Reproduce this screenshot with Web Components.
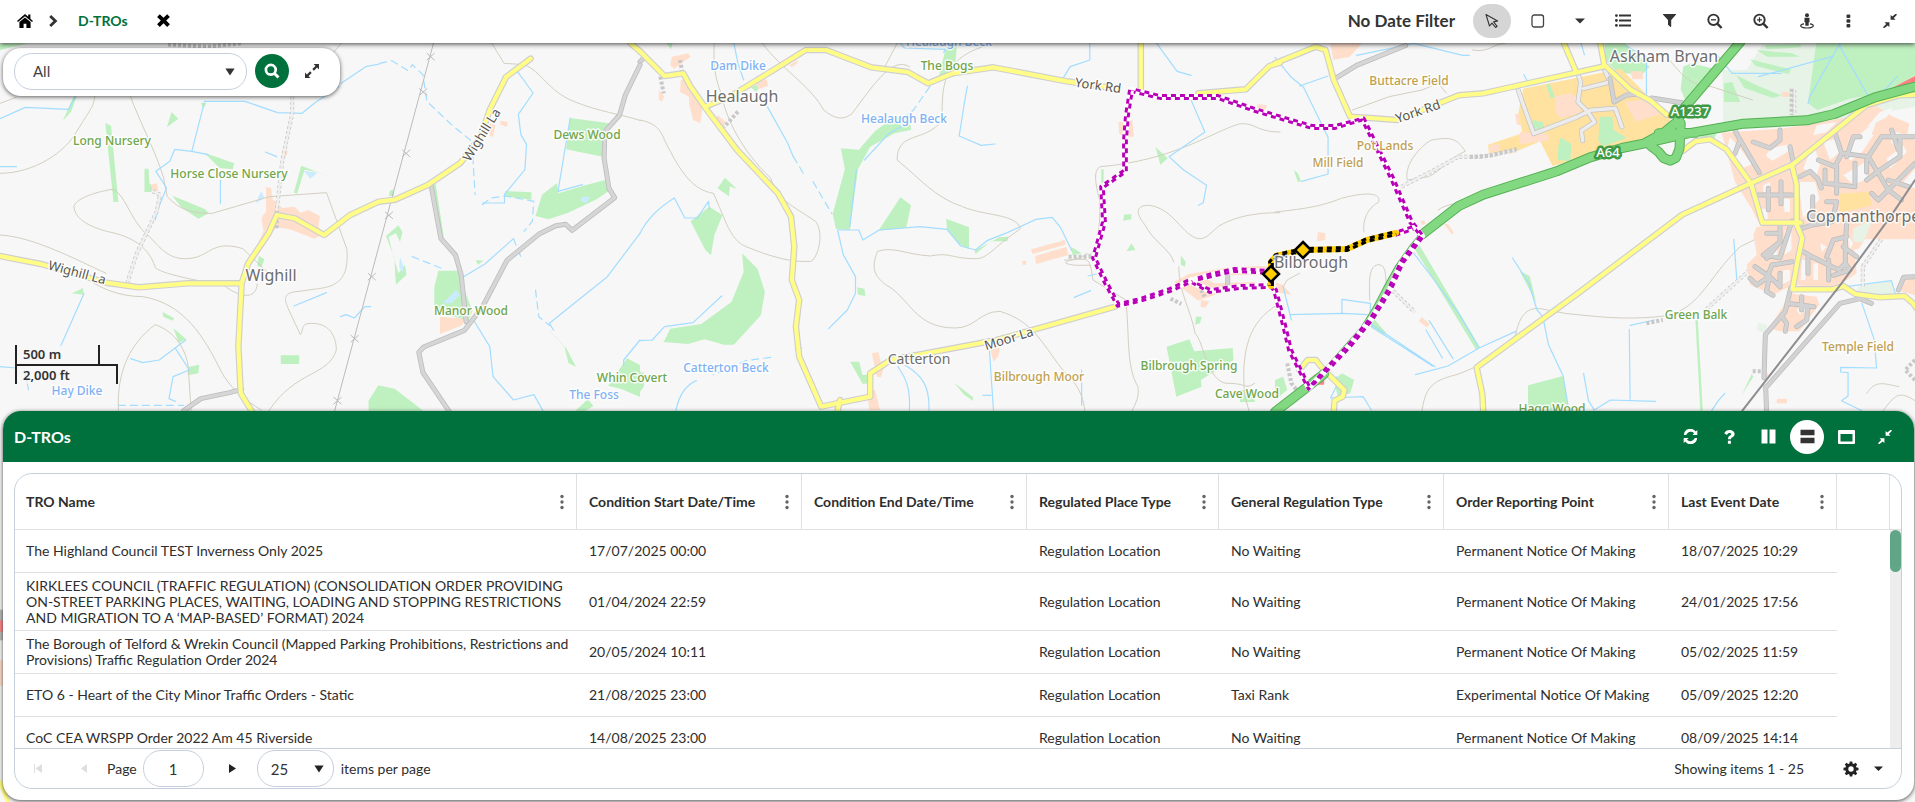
<!DOCTYPE html>
<html lang="en">
<head>
<meta charset="utf-8">
<title>D-TROs</title>
<style>
html,body{margin:0;height:100%}
body{font-family:Lato,"Open Sans",sans-serif;font-size:14px;color:#2e2e2e;background:#f7f7f7;overflow:hidden}
</style>
</head>
<body>
<tro-app></tro-app>

<template id="t-app">
<style>
:host{display:flex;flex-direction:column;height:100vh;position:relative;overflow:hidden}
tro-map{position:absolute;inset:0;z-index:0}
top-bar,main{position:relative}
top-bar{z-index:2}
main{flex:1;min-height:0;display:flex;flex-direction:column;z-index:1}
.view{flex:1;min-height:0;display:flex;flex-direction:column;justify-content:space-between;align-items:flex-start}
search-box{margin:5px 0 0 3px}
map-scale{margin:0 0 27px 15px}
tro-panel{height:calc(50vh - 12px);margin:0 1px 2px 3px}
</style>
<tro-map></tro-map>
<top-bar></top-bar>
<main>
  <div class="view"><search-box></search-box><map-scale></map-scale></div>
  <tro-panel></tro-panel>
</main>
</template>

<template id="t-tool">
<style>
:host{display:inline-flex;width:38px;height:34px}
:host([narrow]){width:29px}
:host([round]){width:34px}
button{all:unset;box-sizing:border-box;width:100%;height:100%;display:flex;align-items:center;justify-content:center;border-radius:17px;cursor:pointer;background:var(--tool-bg,transparent)}
button:focus-visible{outline:2px solid #00703c}
button:disabled{cursor:default}
</style>
<button type="button"><slot></slot></button>
</template>

<template id="t-top">
<style>
:host{display:flex;align-items:center;justify-content:space-between;height:43px;background:#fff;box-shadow:0 1px 5px rgba(0,0,0,.75);padding:0 6px 2px 17px;box-sizing:border-box}
nav,.tools{display:flex;align-items:center}
svg{display:block;fill:currentColor}
nav a{color:#000;text-decoration:none}
nav .chev{margin:0 20px 0 16px;color:#333}
nav a.here{color:#00703c;font-size:14px;font-weight:700;margin-right:29px}
nav button{all:unset;color:#000;cursor:pointer}
.tools{gap:8px;color:#333}
.date{font-size:17px;font-weight:700;margin-right:10px}
.on{--tool-bg:#d5d5d5}
.drop{margin-right:2px}
</style>
<nav aria-label="Breadcrumb">
  <a href="#" aria-label="Home"><svg width="16" height="14" viewBox="0 0 16 14"><path d="M8 0 0 7l1 1.100L8 2.200l7 5.900L16 7l-2.600-2.300V.6h-2.200v2.200zM8 3.400 2.400 8v6H6.600V9.800h2.800V14h4.200V8z"/></svg></a>
  <svg class="chev" width="9" height="12" viewBox="0 0 9 12"><path d="M2.200 0 8.400 6 2.200 12 .2 10.100 4.400 6 .2 1.900z"/></svg>
  <a class="here" href="#">D-TROs</a>
  <button type="button" aria-label="Close"><svg width="13" height="13" viewBox="0 0 12 12"><path d="M2.600.2 6 3.500 9.400.2 11.900 2.700 8.500 6l3.400 3.400-2.500 2.500L6 8.500 2.600 11.900.1 9.400 3.500 6 .1 2.700z"/></svg></button>
</nav>
<div class="tools">
  <span class="date">No Date Filter</span>
  <tool-button class="on" label="Select"><svg width="15" height="16" viewBox="0 0 15 16" stroke="#333" stroke-width="1.1" stroke-linejoin="round" style="fill:none"><path d="M1 1.500 4.500 13l2.500-2.800 3.600 4.300 1.500-1.200-3.500-4.400 4-1z"/></svg></tool-button>
  <tool-button label="Area select"><svg width="14" height="14" viewBox="0 0 14 14" style="fill:none" stroke="#444" stroke-width="1.300"><rect x="1" y="1" width="11.500" height="12" rx="2.200"/></svg></tool-button>
  <tool-button class="drop" narrow label="More selection tools"><svg width="10" height="6" viewBox="0 0 10 6"><path d="M0 .5h10L5 5.600z"/></svg></tool-button>
  <tool-button label="Layers list"><svg width="16" height="13" viewBox="0 0 16 13"><path d="M4 .6h12v2H4zM4 5.500h12v2H4zM4 10.400h12v2H4z"/><circle cx="1.400" cy="1.600" r="1.400"/><circle cx="1.400" cy="6.500" r="1.400"/><circle cx="1.400" cy="11.400" r="1.400"/></svg></tool-button>
  <tool-button label="Filter"><svg width="13" height="13" viewBox="0 0 13 13"><path d="M.3 0h12.400c.3 0 .4.500.2.800L8.200 6v6.600c0 .4-.4.500-.7.300L5 10.800V6L.1.800C-.1.500 0 0 .3 0z"/></svg></tool-button>
  <tool-button label="Zoom out"><svg width="16" height="16" viewBox="0 0 16 16" style="fill:none" stroke="#333"><circle cx="6.500" cy="6.800" r="5.200" stroke-width="1.900"/><path d="M10.500 10.800 14.600 15" stroke-width="2.500"/><path d="M4 6.800h5" stroke-width="1.300"/></svg></tool-button>
  <tool-button label="Zoom in"><svg width="16" height="16" viewBox="0 0 16 16" style="fill:none" stroke="#333"><circle cx="6.500" cy="6.800" r="5.200" stroke-width="1.900"/><path d="M10.500 10.800 14.600 15" stroke-width="2.500"/><path d="M4 6.800h5M6.500 4.300v5" stroke-width="1.200"/></svg></tool-button>
  <tool-button label="Street view"><svg width="14" height="16" viewBox="0 0 14 16"><circle cx="7" cy="2.300" r="2"/><path d="M4.500 4.800h5v4.400H8.700v3.600H5.300V9.200h-.8z"/><path d="M4 10.800c-2 .3-3.300 1-3.300 1.900C.7 14 3.300 15 7 15s6.300-1 6.300-2.300c0-.9-1.300-1.600-3.300-1.900" fill="none" stroke="#333" stroke-width="1.200"/></svg></tool-button>
  <tool-button narrow label="Menu"><svg width="5" height="14" viewBox="0 0 5 14"><rect x=".5" y=".4" width="3.800" height="3.500" rx="1"/><rect x=".5" y="5.200" width="3.800" height="3.500" rx="1"/><rect x=".5" y="10" width="3.800" height="3.500" rx="1"/></svg></tool-button>
  <tool-button label="Collapse"><svg width="14" height="14" viewBox="0 0 14 14"><path d="M13.200 0 14 .8l-3.200 3.200 1.700 1.700H7.600V.9l1.700 1.700L12.400 0zM.8 14 0 13.200 3.200 10 1.500 8.300h4.900v4.800l-1.700-1.700L1.500 14z"/></svg></tool-button>
</div>
</template>

<template id="t-search">
<style>
:host{display:flex;align-items:center;width:337px;height:48px;box-sizing:border-box;padding:0 13px 2px 11px;background:#fff;border-radius:18px;box-shadow:0 1px 4px rgba(0,0,0,.65)}
.pick{position:relative;flex:1}
select{appearance:none;box-sizing:border-box;width:100%;height:37px;border:1px solid #c5d0dc;border-radius:18px;background:#fff;font:15px Lato,sans-serif;color:#424242;padding:0 30px 0 18px}
.pick svg{position:absolute;right:12px;top:15px;pointer-events:none}
svg{display:block;fill:#333}
tool-button.go{--tool-bg:#00703c;margin:0 8px 0 8px}
tool-button.ex{width:30px}
</style>
<div class="pick"><select aria-label="Search in"><option>All</option></select><svg width="10" height="8" viewBox="0 0 10 8"><path d="M.4.400h9.200L5 7.600z"/></svg></div>
<tool-button class="go" round label="Search"><svg width="16" height="16" viewBox="0 0 16 16" style="fill:none" stroke="#fff"><circle cx="6.800" cy="6.800" r="4.900" stroke-width="2.700"/><path d="m10.500 10.500 4 4" stroke-width="3"/></svg></tool-button>
<tool-button class="ex" label="Expand"><svg width="14" height="14" viewBox="0 0 14 14"><path d="M8.600 0H14v5.400l-1.900-1.900-3.200 3.200-1.600-1.600 3.200-3.200zM5.400 14H0V8.600l1.900 1.900 3.200-3.200 1.600 1.600-3.200 3.200z"/></svg></tool-button>
</template>

<template id="t-scale">
<style>
:host{display:block;font:600 13px/18px "Noto Sans","Open Sans",sans-serif;color:#333}
div{box-sizing:border-box;border:2px solid #222;padding-left:6px;height:19px;background:rgba(247,247,247,.6)}
.m{width:85px;border-width:0 2px;line-height:18px}
.f{width:103px;border-bottom:0;height:20px;line-height:18px}
</style>
<div class="m">500 m</div><div class="f">2,000 ft</div>
</template>

<template id="t-panel">
<style>
:host{display:flex;flex-direction:column;background:#fff;border-radius:18px;overflow:hidden;box-shadow:0 1px 4px rgba(0,0,0,.7)}
header{display:flex;align-items:center;justify-content:space-between;flex:none;height:51px;background:#00703c;color:#fff;padding:0 12px 0 11px}
h1{margin:0;font-size:16px;line-height:20px;font-weight:700}
.acts{display:flex;gap:5px}
svg{display:block;fill:#fff}
.on{--tool-bg:#fff}
data-grid{flex:1;min-height:0;margin:11px 12px 11px 11px}
</style>
<header><h1>D-TROs</h1>
<div class="acts">
 <tool-button round label="Refresh"><svg width="15" height="15" viewBox="0 0 15 15"><path d="M14.300 1v5H9.400l1.700-1.700a4.700 4.700 0 0 0-7.500.9l-.4.900H.9A6.500 6.500 0 0 1 12.700 2.600zM.7 14V9h4.900l-1.700 1.700a4.700 4.700 0 0 0 7.500-.9l.4-.9h2.300A6.500 6.500 0 0 1 2.300 12.400z"/></svg></tool-button>
 <tool-button round label="Help"><svg width="11" height="14" viewBox="0 0 11 14"><path d="M3.900 10.700h3v3h-3zM.2 3.300C1.200 1.200 3 0 5.600 0c2.800 0 5 1.700 5 4 0 1.700-1 2.600-2.200 3.300-1 .6-1.400.9-1.400 1.900H4c0-2.100.8-2.900 2.100-3.700.8-.5 1.100-.8 1.100-1.400 0-.8-.7-1.200-1.600-1.200-1.200 0-1.900.6-2.600 2z"/></svg></tool-button>
 <tool-button round label="Split vertically"><svg width="15" height="15" viewBox="0 0 15 15"><path d="M.5.500h6v14h-6zM8.500.500h6v14h-6z"/></svg></tool-button>
 <tool-button round class="on" label="Split horizontally"><svg width="15" height="15" viewBox="0 0 15 15" style="fill:#333"><path d="M.5.700h14v5.600H.5zM.5 8.700h14v5.600H.5z"/></svg></tool-button>
 <tool-button round label="Maximise"><svg width="17" height="14" viewBox="0 0 17 14"><path fill-rule="evenodd" d="M1 0h15q1 0 1 1v12q0 1-1 1H1q-1 0-1-1V1q0-1 1-1zM2.500 4v7.500h12V4z"/></svg></tool-button>
 <tool-button round label="Collapse"><svg width="14" height="14" viewBox="0 0 14 14"><path d="M13.200 0 14 .8l-3.200 3.200 1.700 1.700H7.600V.9l1.700 1.700L12.400 0zM.8 14 0 13.200 3.200 10 1.500 8.300h4.900v4.800l-1.700-1.700L1.500 14z"/></svg></tool-button>
</div></header>
<data-grid></data-grid>
</template>

<template id="t-grid">
<style>
:host{display:flex;flex-direction:column;border:1px solid #c5d0dc;border-radius:18px;overflow:hidden}
.body{flex:1;min-height:0;display:flex}
.scroll{flex:1;min-width:0;overflow:hidden}
table{border-collapse:separate;border-spacing:0;table-layout:fixed;width:100%;font-size:14px;line-height:16px}
th,td{box-sizing:border-box;text-align:left;padding:4px 4px 4px 12px;border-bottom:1px solid #e0e0e0}
th{height:56px;border-right:1px solid #e0e0e0;font-weight:700;padding-right:9px}
th div{display:flex;align-items:center;justify-content:space-between}
th button{all:unset;width:10px;height:16px;display:flex;justify-content:center;cursor:pointer}
th svg{fill:#666}
td{height:43px}
th:first-child,td:first-child{padding-left:11px}
td:last-child{border-bottom:0}
tr.tall td{height:58px}
.bar{width:11px;flex:none;display:flex;flex-direction:column}
.bar .top{height:55px;border-bottom:1px solid #e0e0e0}
.bar .track{flex:1;background:#ededed}
.bar .thumb{height:42px;border-radius:6px;background:#60a586}
</style>
<div class="body">
 <div class="scroll"><table><colgroup></colgroup><thead><tr></tr></thead><tbody></tbody></table></div>
 <div class="bar"><div class="top"></div><div class="track"><div class="thumb"></div></div></div>
</div>
<grid-pager></grid-pager>
</template>

<template id="t-pager">
<style>
:host{display:flex;align-items:center;justify-content:space-between;flex:none;height:39px;border-top:1px solid #c5d0dc;font-size:14px;padding:0 13px 0 0}
.l,.r{display:flex;align-items:center}
svg{display:block;fill:#222}
.off svg{fill:#dedede}
input,select{appearance:none;box-sizing:border-box;height:37px;border:1px solid #c5d0dc;border-radius:18px;background:#fff;font:15px Lato,sans-serif;color:#333;margin:0}
input{width:61px;text-align:center;margin:0 12px 0 6px}
select{width:77px;padding:0 13px}
.pick{position:relative;margin-right:7px}
.pick svg{position:absolute;right:10px;top:15px;pointer-events:none}
.first{width:46px}.prev{width:46px}.next{width:34px;margin-right:7px}
.gear{width:34px;margin-left:30px}.more{width:20px}
</style>
<div class="l">
 <tool-button class="off first" disabled label="First page"><svg width="8" height="9" viewBox="0 0 8 9"><path d="M0 0h1v9H0zM8 0v9L1.500 4.500z"/></svg></tool-button>
 <tool-button class="off prev" disabled label="Previous page"><svg width="6" height="9" viewBox="0 0 6 9"><path d="M6 0v9L0 4.500z"/></svg></tool-button>
 <label for="pg">Page</label><input id="pg" value="1">
 <tool-button class="next" label="Next page"><svg width="7" height="9" viewBox="0 0 7 9"><path d="M0 0v9l7-4.500z"/></svg></tool-button>
 <div class="pick"><select id="sz"><option>25</option></select><svg width="10" height="8" viewBox="0 0 10 8"><path d="M.4.400h9.200L5 7.600z"/></svg></div>
 <label for="sz">items per page</label>
</div>
<div class="r"><span>Showing items 1 - 25</span>
 <tool-button class="gear" label="Settings"><svg width="16" height="16" viewBox="0 0 16 16"><path fill-rule="evenodd" d="M6.800.5h2.400l.4 2 1.200.5 1.700-1.200 1.700 1.700L13 5.200l.5 1.200 2 .4v2.400l-2 .4-.5 1.200 1.200 1.700-1.700 1.700-1.700-1.200-1.200.5-.4 2H6.800l-.4-2-1.200-.5-1.700 1.200-1.700-1.700L3 10.800l-.5-1.200-2-.4V6.800l2-.4L3 5.200 1.800 3.500l1.700-1.700L5.200 3l1.200-.5zM8 5.300a2.700 2.700 0 1 0 0 5.400 2.700 2.700 0 0 0 0-5.400z"/></svg></tool-button>
 <tool-button class="more" label="More"><svg width="9" height="6" viewBox="0 0 9 6"><path d="M0 .5h9L4.500 5z"/></svg></tool-button></div>
</template>

<template id="t-map">
<style>
:host{display:block;overflow:hidden;background:#f7f7f7}
svg{display:block;width:100%;height:100%}
path{vector-effect:non-scaling-stroke;fill:none;stroke-linejoin:round;stroke-linecap:round}
.w{fill:#bff0c0}.p{fill:#e6f3e6}.h{fill:#ffdfcc}.o{fill:#ffe2a0}.l{fill:#c9ecff}.r{fill:#ff8080}.k{fill:#f7f7f7}
.c{stroke:#d3cfc0;stroke-width:1}
.b{stroke:#a3ddff;stroke-width:1.200}
.bd{stroke:#a3ddff;stroke-width:1.200;stroke-dasharray:7 5}
.g1{stroke:#bdbdbd;stroke-width:5}.g2{stroke:#d6d6d6;stroke-width:3.400}
.s1{stroke:#bbb;stroke-width:5}.s2{stroke:#d2d2d2;stroke-width:3.600}
.y1{stroke:#cfcfcf;stroke-width:6.500}.y2{stroke:#fffd85;stroke-width:4.200}
.a1{stroke:#55b055;stroke-width:10}.a2{stroke:#82d982;stroke-width:8}
.t{stroke:#c8c8c8;stroke-width:4;stroke-dasharray:3 2;stroke-linecap:butt}.t2{stroke:#efefef;stroke-width:2.400}
.rail{stroke:#8d8d92;stroke-width:2}
.pl{stroke:#bbb;stroke-width:1}
text{font-family:"Noto Sans","Open Sans",sans-serif;text-anchor:middle;font-size:12px;font-weight:500;paint-order:stroke;stroke:rgba(255,255,255,.85);stroke-width:3px;stroke-linejoin:round}
.v{fill:#6e6e6e;font-size:16px;font-weight:400}
.n{fill:#6fa64a}.q{fill:#7fb2f5}.f{fill:#bfa04f}.d{fill:#555;font-size:13px;font-weight:400}
.a{fill:#fff;stroke:#3f9a45;stroke-width:5px;font-size:13px}
.st{text-anchor:start}
.small{font-size:14px}
</style>
<svg viewBox="0 0 1915 802" preserveAspectRatio="xMinYMin slice" role="img" aria-label="Map">
<g id="land">
<g transform="scale(.408163 .333333)">
<path class="w" d="M0 130H70L0 150zM180 290l8 0-14 45-20 27zM258 369l14 8 18 228-12 2zM354 506l10 0 2 44 10 10-4 16-18 0zM420 336l17 20-28 26zM492 308l14 0-8 18zM500 458l74 32-4 18-32-4zM422 587l80 40 9 13-25 16-40-32zM738 497l88 42-46-22-34-8-18 72-8-3zM204 864v20l-28-4zM398 936l28 18-2 8-24-12zM425 985l31 32-18 12zM688 1066h45v26h-45zM488 1094l-2 26-26 6 0-24zM903 1232l0-30 24-46 40 10 70 66zM1397 354l96 16-16 100-90-22zM1238 573l64 4 0 22-64-10zM1328 584l36-34 4 30 66-24 56-18 8 30-36 30-70 40-48 20-32-10 10-40zM1066 540l-10 10 24 160 8 6zM955 572l10-4 0 20-12 0zM976 676l10 20-6 30-10-26-18 10 12 60 12 50 16-26 4 30-26 30-4-80-20-66zM1074 812h50l14 60 20 60-10 30-60-20-24-20 0-60zM634 768l14 10-8 24-10-4zM1345 990l42 54 24 56-18-10-10-50-36-46zM1536 1075l32 20v96l-46-24-32-10zM1440 1198l14 20-20 14h-24zM1165 780l20 2-14 12z"/>
<path class="h" d="M652 560l12 4 4 34 24 26 30-4 14 18 20-8 28 18-4 30 10 26-20 12-60-28-34-6-20 40-40 72-4-10 34-90-6-40 12-20zM1226 362l18 4-2 14-16-6zM1200 370l14 6-6 34-8-2zM370 554l14-4 4 22-14 2zM694 450l12 2-6 20-8-2zM1078 950l62 6-8 20-54 26z"/>
<path class="l" d="M640 574l8 20-22 16zM744 512l34 6-18 18zM1424 590l22 0-10 20-14-8zM1084 910l34-40 8 16-20 24zM980 770l8 30-2 20-8-20z"/>
<path class="c" d="M0 520c80 0 160-60 190-130 30-60 40-70 42-100M320 290c20 70 60 160 80 240l10 60c30 40 60 50 110 50l140-50 140-12 50 170c4 70-10 110-70 118l-60 10c-30 6-20 30-14 50l30 78c10-20 0-34 28-34 50 0 60 50 60 80-20 80-100 60-165 182M0 705c80 5 180 70 260 115M275 568c-50 10-90 30-94 52 4 40 40 60 80 74 40 10 100 30 120 110 20 20 130 46 180 52M275 568c30 10 40 80 80 130 30 30 50 80 100 78 60 0 60-60 140-30l60 70M200 820c30 40 90 70 150 70 100 20 150 120 190 220 20 50 60 90 100 120M290 1230c-4-120 30-200 90-256 50 20 80 80 82 140l6 118M1205 130l30 60 50 4c40 20 60 80 120 110 60 30 120 40 165 58M0 310l40-18M836 130l-18 26M540 848c60 60 90 40 90 4"/>
<path class="b" d="M0 356l62-34 106 6 16-38M836 250l60-50 34-8M500 304l100 0 80 34 60 2 30-30 60-50M500 310l-30 144-42-6-12 36-34 30 26 50-20 60-8 36M470 454l40 10M540 540v70M650 456l28 14M206 880l-58 160M320 1076l30 12 40-8 65-60M430 1046l34 64-40 20-10 66 16 8M1268 215l38 64-36 64 6 60 14 30-4 76-50 74v26l-54 0M1397 354l-30 220 60-20M1568 700l-80 130-142 140M1346 970l10 20M1160 960l40 80 8 90 50 70 50-16 22 48M720 918l80-40M834 950l14-6 20 10 26-34 14 0M1136 830l52-38 70-76M1568 1020l-40 60 0 16M0 1100l40 4M60 1110l10 60M0 500l40 0"/>
<path class="bd" d="M930 190l30-8 40 30 10-18 26 30 10 80 60 70 50 50 8 160M1182 614l20-20 36-6 70 16-4 60-20 30M1010 770l70 34M1312 870l8 80 26 26M290 1216h160M1258 716l20 60"/>
<path class="pl" d="M1062 130 820 1232M1046 160l18 20m0-20-18 20M1028 266l18 20m0-20-18 20M986 450l18 20m0-20-18 20M944 636l18 20m0-20-18 20M902 820l18 20m0-20-18 20M860 1006l18 20m0-20-18 20M818 1192l18 20m0-20-18 20"/>
<path class="t" d="M716 290v50l-24 140-14 150 0 60M374 574l18 10-8 50-50 130-22 84M590 130l-80 10-100-6"/><path class="t2" d="M716 290v50l-24 140-14 150M374 574l18 10-8 50-50 130-22 84"/>
</g>
<g transform="translate(640) scale(.408163 .333333)">
<path class="w" d="M750 140h26l-6 90h-38zM660 340l4 50-40 10-60 40-30 68-20 182-34-3-8-46 30-134-10-62 44 4 40-56 34-30zM638 592l26 24-12 68-68 8zM750 656l56 26v66l-24-16-30-46zM820 752l60-40 22-2-2 14-40 0-38 38zM208 533l30 34-18-8-2 30-28-24zM170 620l32 26-20 60-8 60-14-16-36-86zM250 760l38 46 18 70-10 70-66 88-24 0-48-16-40 14-60-6 16-40 76-14 74-66 30-90zM532 862l18 4 2 22-18-4zM515 1085h22l8 40 18-2v28h-18zM770 1148l46 44v10l-22-18zM1130 508l6 0 0 60-6-20zM1263 441l30 34-18 20zM1186 644l18-2 0 16-20 4zM1204 730l10 20-22 4zM1325 766l12 20-2 14-10-6zM1290 1040l56-22 12 36 94-10 2 36-80 60 2 20-62 30zM1362 950l14 0-4 20-12 4zM1470 1170h36v36h-36zM0 1115l10 4 0 40-10 16zM1056 740l26 20-22 6zM272 262l20-10-6 26zM65 130h15l-4 18z"/>
<path class="h" d="M100 240l20-6 34 80-6 56-18-10-10-50 0-20-22-14zM78 170l40-10 6 10-40 36-10-10zM284 246l26-8 4 20-24 10zM366 196l20-16 0 10-14 12zM190 345l20 20-6 16-20-20zM1172 366h14l20-6 4 50-14 0-22-8zM958 748l84-28 0 14-80 28zM968 768l78-28 2 26-78 26zM936 782h10v12h-8zM568 1060l16-4 6 30 14-4-14 50-10-2zM556 1170h20l12 60h-26zM858 1046l24-2-4 24-12 18zM1512 312l24 4-6 20h-14zM1345 822l90-18 80-6 53 4v20l-140 4-40 10 20 14 100-4v22l-30-2-60 14-50 22-60-56zM1375 900l20 4-10 20-12-4zM46 270l14 20-6 14-8-4z"/>
<path class="c" d="M0 360c40 10 50 30 60 60 40 100 70 150 120 160 30 80 40 140 80 160 60 30 110 48 160 44 20-20 30-90 10-120-60-50-90-60-110-130-70-80-110-180-120-250-20-60-20-100-18-154M300 130c40 70 120 130 150 200 30 30 50 30 70 10 60-100 100-170 140-140M840 140c-100 40-100 120-100 220-40 70-110 30-110 120 60 60 90 110 160 140 60 30 130 20 142 66-70 60-80 90-110 90-60 0-60-20-110-8-60-4-90-30-130-14-20 60 0 80 20 100 60 40 70 130 170 130 50 0 60-50 110-50 80 30 100 90 150 170 30 40 60 70 60 166M1568 396c-60 0-60-30-100-24-60 20-160 110-340 128-20 10-10 60-4 90 8 20 0 200-30 170-10 20-60 20-50 30 20 10 50 4 60 6M1568 638c-80 0-120 20-150 40-20 20-30 40-50 38-40-10-60-90-120-100-40 0-30 30-10 60 20 50 60 70 70 110M1040 780c60 0 60-20 70 60l80 60c10 100 0 200 30 260 4 30-6 50-14 72M1320 800c0 80 30 130 40 200 20 20 30 150 80 150 50 0 40 20 66 0M1568 910c-60 40-100 110-86 280l10 42M630 130l-30 70"/>
<path class="b" d="M230 130l10 60 14 50M312 320l50 110 14 42M638 130l10 14 100 4-4 10M1102 130v50l-48 20-18 36M802 258l-8 56-12 94 54 28 34-4M1266 130l50 84 34 12M1350 300l34 96-88 74 36 40 56 46-8 52-12 8M484 690h52l10 30 40-30 100-10 66 8 34 50 36 12 28-28 50-24 70-40 40-6 20 30 28 70M0 700c20-50 50-80 84-106l26 60 30 0 28-50 2 24M30 1020l30-40 70-12 70-80M0 1022l30-2M484 690l14 74 30 66 0 50-20 50-46 56M530 510l-16 170M550 480l60-80 30-20M632 1100c10 20 32 50 28 130M650 1096c40 30 60 60 58 134M856 1050l10 180M1064 892l40-20M1082 1110l0 106M88 1232c10-60 30-80 50-90M840 1186h20M1098 828l20-6"/>
<path class="bd" d="M376 470l26 54M424 545l46 96M710 260l-40 70-20 22M320 1072l-60 10-80 42M380 1048l28-8"/>
<path class="t" d="M98 180l6 40M50 230l8 50M240 335l-34 46M1050 770h56M1375 870l8 20M1300 896l26 16"/>
<path class="s1" d="M0 185l10-12M1440 830v30"/><path class="s2" d="M0 185l10-12M1440 830v30"/>
</g>
<g transform="translate(1275) scale(.408163 .333333)">
<path class="p" d="M1096 210h60l40-80h372v190l-180 40-290 6z"/>
<path class="w" d="M1000 200l20-10 60 18-66 120-20-60zM808 130h50l60 70-20 26-60-10-32-40zM1306 310l20-180h242v96l-60 50-100 20-80 34zM1200 136l88-4 0 10-84 6zM1180 150l86 10 20 10-80 0zM1164 178l100 30-6 14-80-24zM1130 226l50 30 60 30-20 8-70-30zM1100 250l20-4 20 60h-40zM1380 260l80-40 30 10-60 30-50 20zM340 742l14-6 148 306-10 6zM600 814l24 14 16 80zM620 1156l86-28 14 104h-100zM1030 960h6l12 272h-6zM1168 1122l4 8-28 54zM164 1120l30 20-10 40-30 10-10-50zM238 950l34 48-6 8-32-26zM46 510l10 10 8 24-8 2zM0 1140l20-10 10 40-30 30zM1046 400l36 0-6 16h-36zM1524 670l6 20-10 16-14-20z"/>
<path class="o" d="M608 266l240-60 120 150 0 40-130 50-158 52-30-74-70 36-56-2-2-24 84-34-10-60z"/>
<path class="w" d="M664 256l8-6 14 40-10 6zM700 412l26 20-2 52-32-4 2-40zM796 350l30 0 4 40 32 24-60 26-10-20zM630 360l26 6 4 16-24 8z"/>
<path class="h" d="M688 288l36-8 24 20 0 40-50 14-12-20zM600 396l70 6 0 20-70 10zM526 436l24-4v22h-26zM858 306l50-8 36 44-60 24zM588 342l10 0 4 36-10-6zM135 130h78l-30 40-40 10zM105 696l18 4 0 20-20 4zM356 664l10-4 2 12-8 4zM414 672l10 0 14 26-4 6zM360 952l20 20-8 10-20-18zM1230 1196h24v10h-24zM870 214l30 0 2 24h-26zM1240 276h22v14h-22zM0 846l20 10 20 28-30-6z"/>
<path class="r" d="M1490 278l78-50v24zM96 1124l26 0-2 30-40 0z"/>
<path class="p" d="M1430 860l80-18 10 38-60 6-36-10zM1184 968l22 8-6 24-20-10z"/>
<path class="c" d="M0 636c80-10 120-20 160-40 60-20 100-20 94 10-30 20-40 60-36 90M190 330l90-40 80-20 40-20 20 30M324 540c-10-50 40-110 60-120 40-8 60-10 82 34-40 20-60 60-90 76l-50 10M400 630c30-30 100-20 240-90M232 900c0-40-6-100 20-106 30 0 10 60 30 80M360 1232c10-80 30-90 90-110 60-30 120-60 140-120 10-60 30-80 60-76l60 14c80 10 140 20 230 10 100-10 120-120 200-210l50-30M20 860l10-20 30-20M484 150c40 10 50-20 80-20M960 170c40 60 60 90 110 90l100 40M1490 1232c30-50 40-60 78-30M1450 1180c20-40 40-30 78-20"/>
<path class="b" d="M0 172l40 60 30 30 60 150 0 110-65 22M60 258l70-30M860 138l50 34 0 110M200 166l80-20 60-16 120 36h16M610 224l10 24M750 130l8 34M1080 160l40 60 120 0M1184 230l180-60M1306 310l4-20 74-160 0 10 80 170 60-80M582 774l40 76 20 80 14 20 14 84 36 94 14 104M1124 718l8 130M164 898l70 12-2 60 160 130M164 898v40M36 944l130-4 60 4M236 980l150 118M370 990l40 84M378 962l58 114M344 1124l80-26 76-54 90-50M340 760l50 80 60 100 50 104M868 988l2 210M870 976l60-16M756 1120l12 82 14 28 40-30 110 4M1070 1232l16-30 16-22M1400 860l110-18 10 38M1438 910l30 108 6 86-88-2v14l18 2v70l-16 14 50 30M20 860l20 100M150 1130l0 30-14 34 80-4 20 40"/>
<path class="t" d="M310 560l80-50 60-40h60l80-20M280 862l62 74M1190 780l-130 144-10 10M1530 700l-40 10-50 90v64M910 970l40-10M1272 270v76M30 1090l10 60 20 30M1190 1114h-24M1568 1080l-24 30 24 30"/><path class="t2" d="M310 560l80-50 60-40h60l80-20M280 862l62 74M1190 780l-130 144-10 10M1530 700l-40 10-50 90v64M1272 270v76"/>
</g>
<g transform="translate(1470 42) scale(.333333)">
<path class="h" d="M755 272l180-12 80-14 120-20 70-44 60 40 70 30v340h-150l-20 30h-290l0-62-30-60-50-80z"/>
<path class="k" d="M780 285l35 40 30 42-24 10-50-60zM900 320l60-14 8 14-60 36-20-14zM1000 380l30-80 20 70-10 30zM1060 300l40-10 10 40-30 24zM1130 320l60-60 20 20-40 60-30 16zM1230 210l40-14-20 30-60 30zM1300 420l35-40v60zM985 420l50 0 14 50-50 60zM1120 400l50-30 30-20-10 60-40 20zM880 430l20-10v30h-20zM1250 350l50-40 10 20-50 50zM1160 285l60-50-10 30-30 50zM1280 270l26 10-20 40-24-20zM940 470l20 0 0 40-16 0zM870 500l20 0 4 30-20 4zM1040 250l60-10-30 30-40 10zM1320 240l15 6v50l-24-20z"/>
<path class="t" d="M0 345l60-4 80-20M965 140v80"/>
<path style="stroke:#c4c4c4;stroke-width:5" d="M145 145l10 30 36 100 130-50 40-20 75-6 20 56M322 90l10 30-8 60 30 30 20 30-40 26 4 30M404 84l16 36-80 20"/>
<path style="stroke:#ececec;stroke-width:3.500" d="M145 145l10 30 36 100 130-50 40-20 75-6 20 56M322 90l10 30-8 60 30 30 20 30-40 26 4 30M404 84l16 36-80 20"/>
<path class="s1" d="M420 110l12 70 36-20 34-4M545 168l90 14"/><path class="s2" d="M420 110l12 70 36-20 34-4M545 168l90 14"/>
<path class="o" d="M1110 455l86-6 10 40-36 10-60 12z"/><path class="p" d="M1150 560l60-30-30 70h-34z"/>
</g>
<g transform="translate(1700 130) scale(.333333)">
<path class="h" d="M170 290h150l100 0 40 40 10 100-30 20-40 20-70 0-50-6-60 30-70-30-10-60 30-30-10-60zM270 490l80 10 8 24-60 80-60 0-30-10 40-64zM590 480l18-40 37-4v60zM230 810h30v10h-30zM196 720l10 16-10 14z"/>
<path class="k" d="M254 300l20 0 0 60-20 14zM306 390l10 0 0 60-14 0zM360 340l20 10-14 16zM290 540l20-20 10 20-20 14zM250 420l20 0 0 30-24 14zM440 310l20 30-10 20zM340 400l14 0 0 50-14 0zM216 350l16-6 0 30-20 4z"/>
<path class="s1" d="M105 0l15 30-15 40M108 8l70 120M160 36l50 18 30-24 0-30M270 50l10 50M300 140l30-16 24 24 10 26M175 195h100M205 175v64M243 155v66M405 10l20 60 80 10 40-60 70 0 30 0M425 70l-20 40-50-20M440 80l20-60 20 0M410 110l0 80M375 120l0 40 90 10M465 100v60M500 90v36M505 80l60 100 40 30M600 20v60l-60 40M540 120l-40 30M565 150l60 20M645 100l-110 110-20-20M575 0l20 60M380 215h30l-14 60-60 10-30 10M440 280l-4 60 0 60-20 20-80-40-36-20M380 380l20-50 40-10M430 350l40 30M436 400l14 20-50 16M386 390v60M324 380v50M338 200v60M240 285l0 50-40 50M240 335l-50 40 50 8 36-110M200 310l40 0M276 395l-60 10-16 40-30 20-20-20M210 440l30 30 0-40M165 410l44 30-10 44 20 12M272 474l-16 70-60 70-4 130M262 520l80 10M305 500v40M246 560l14 20-4 24M290 590l30-20 4-40M200 850l-3-80M200 770l220-250 60-14 34 14M595 480l16-38 34-2"/>
<path class="s2" d="M105 0l15 30-15 40M108 8l70 120M160 36l50 18 30-24 0-30M270 50l10 50M300 140l30-16 24 24 10 26M175 195h100M205 175v64M243 155v66M405 10l20 60 80 10 40-60 70 0 30 0M425 70l-20 40-50-20M440 80l20-60 20 0M410 110l0 80M375 120l0 40 90 10M465 100v60M500 90v36M505 80l60 100 40 30M600 20v60l-60 40M540 120l-40 30M565 150l60 20M645 100l-110 110-20-20M575 0l20 60M380 215h30l-14 60-60 10-30 10M440 280l-4 60 0 60-20 20-80-40-36-20M380 380l20-50 40-10M430 350l40 30M436 400l14 20-50 16M386 390v60M324 380v50M338 200v60M240 285l0 50-40 50M240 335l-50 40 50 8 36-110M200 310l40 0M276 395l-60 10-16 40-30 20-20-20M210 440l30 30 0-40M165 410l44 30-10 44 20 12M272 474l-16 70-60 70-4 130M262 520l80 10M305 500v40M246 560l14 20-4 24M290 590l30-20 4-40M200 850l-3-80M200 770l220-250 60-14 34 14M595 480l16-38 34-2"/>
</g>
</g>
<g id="roads"></g>
<g id="orders"></g>
<g id="edges"><path d="M1 612v26" style="stroke:#bbb;stroke-width:5"/><path d="M1 622v8" style="stroke:#f88;stroke-width:4"/><path d="M1 662v22" style="stroke:#ffdfcc;stroke-width:4"/><path d="M0 782l8 20" class="y2"/></g>
<g id="labels"></g>
</svg>
</template>

<script>
const stamp = (host, id) => {
  const root = host.attachShadow({ mode: 'open' });
  root.append(document.getElementById(id).content.cloneNode(true));
  return root;
};
const simple = (name, id) => customElements.define(name, class extends HTMLElement {
  constructor() { super(); stamp(this, id); }
});

customElements.define('tool-button', class extends HTMLElement {
  constructor() { super(); stamp(this, 't-tool'); }
  connectedCallback() {
    const b = this.shadowRoot.querySelector('button');
    b.setAttribute('aria-label', this.getAttribute('label') || '');
    b.disabled = this.hasAttribute('disabled');
  }
});

// Road centre lines: [column offset, kind, path]; columns share one drawing scale.
const ROADS = [
  [0, 'g', 'M1056 555l24 160 36 50 14 60 12 140M1568 195l-36 90-14 60-36 50-2 80 12 90 14 28-104 98-16-18-24 4-40 24-80 80-60 140-44 70-100 50-12 16 10 60 86 156M592 1168l-30 10-70 18-42 36'],
  [1275, 'g', 'M320 136l-120 60-48 36'],
  [0, 'y', 'M0 768l100 24 160 56 80 14 120-12h132l0 0-8 190 6 140 38 76M592 850l16-60 50-90 20-55 44 10 72 50 64-60 70-40 40-6 80-44 80-66 50-80 22-80 40-98 60-55M1545 130l23 24'],
  [640, 'y', 'M0 154l60 74 46-8 18 40 34 60 80 130 100 130 32 70 8 90-6 100 18 60-8 80 8 90 54 150 120-30v-70l50-40 260-60 290-100M160 320l60-30 120-90 66-50h50l110 52 90 14 50 34 60-30 100-18 180 42 110 20 14 4M1227 130v140M1568 188l-26 10-58 70-116 12M484 1232l6-32'],
  [1275, 'y', 'M0 190l40-20 60-30 24 10 20 90 40 110 50 4 66 6 150-74 60-6 300-82 60 70 50 34 40 42M708 130l28 80M797 130l10 66M1000 452l30-28 36-6 40 30 60 102 28 118h94M1568 284l-40 2-80 30-60 60-120 118-110 60-160 90-260 240-244 218 14 80 4 100-54 24 14 56M1266 494l12 60v120l14 40-12 70-12 84 100 0 24-10 30 24 60 10 60-4 20 20 30 50M60 1110l20-30h20l20 30 50 60-4 20-20 12-2 30'],
  [1275, 'a', 'M0 1236l120-114M360 704L450 618 510 584 690 514 772 472 850 444 903 431 950 400 985 366 1001 326 1140 126M850 444L903 431 1009 401 1148 371 1303 361 1370 342 1470 292 1568 260M919 436L940 456 952 474 968 482 982 474 991 446 994 370M940 400L1030 398'],
  [1275, 'thin', 'M110 1130L215 985 245 925 275 855 300 800 335 740 360 704']
];
const STYLE = { g: ['g1', 'g2'], y: ['y1', 'y2'], a: ['a1', 'a2'] };

// Traffic orders, drawn as two lanes of alternating dashes.
const ORDERS = [
  ['#b800b8', '#fff', [[1131,90],[1160,97],[1218,97],[1255,110],[1285,119],[1312,127],[1335,127],[1363,119],[1392,178],[1411,222],[1422,236],[1402,262],[1390,289],[1372,318],[1350,345],[1330,366],[1309,388],[1290,350],[1284,325],[1275,290],[1271,286],[1240,287],[1210,291],[1190,281],[1212,275],[1234,270],[1270,272]]],
  ['#b800b8', '#fff', [[1131,90],[1127,115],[1125,140],[1125,171],[1102,187],[1104,222],[1094,258],[1106,283],[1118,305],[1140,300],[1170,290],[1192,280]]],
  ['#b800b8', '#fff', [[1395,234],[1413,228]]],
  ['#000', '#ffcc00', [[1271,286],[1271,262],[1276,256],[1303,250],[1347,249],[1367,240],[1396,233]]]
];
const shift = (pts, d) => 'M' + pts.map((p, i) => {
  const a = pts[Math.max(0, i - 1)], b = pts[Math.min(pts.length - 1, i + 1)];
  const l = Math.hypot(b[0] - a[0], b[1] - a[1]);
  return (p[0] - (b[1] - a[1]) / l * d).toFixed(1) + ' ' + (p[1] + (b[0] - a[0]) / l * d).toFixed(1);
}).join('L');

const LABELS = [
  ['n','Long Nursery',112,145],['n','Horse Close Nursery',229,178],['n','Dews Wood',587,139],['n','Manor Wood',471,315],
  ['v','Wighill',271,281],['q','Hay Dike',77,395],['d','Wighill La',77,277,15],['d','Wighill La',482,139,-58],
  ['q','The Foss',594,399],['n','Whin Covert',632,382],['q','Dam Dike',738,70],['n','The Bogs',947,70],
  ['v','Healaugh',742,102],['q','Healaugh Beck',904,123],['q','Healaugh Beck',949,46],['d','York Rd',1098,90,8],
  ['d','Moor La',1009,343,-17],['v small','Catterton',919,364],['q','Catterton Beck',726,372],['f','Bilbrough Moor',1039,381],
  ['n','Bilbrough Spring',1189,370],['n','Cave Wood',1247,398],['f','Buttacre Field',1409,85],['d','York Rd',1418,116,-19],
  ['f','Pot Lands',1385,150],['f','Mill Field',1338,167],['v','Bilbrough',1311,268],['v','Askham Bryan',1664,62],
  ['a','A1237',1690,116],['a','A64',1608,157],['v st','Copmanthorpe',1806,222],['n','Green Balk',1696,319],
  ['f','Temple Field',1858,351],['n','Hagg Wood',1552,413]
];

customElements.define('tro-map', class extends HTMLElement {
  constructor() {
    super();
    const r = stamp(this, 't-map');
    const line = (v, css) => `<path ${css} transform="translate(${v[0]}) scale(.408163 .333333)" d="${v[2]}"/>`;
    const pick = k => ROADS.filter(v => v[1] === k);
    let s = '';
    for (const k of ['g', 'y', 'a']) for (const c of STYLE[k]) {
      if (k === 'a') for (const v of pick('thin')) s += line(v, c === 'a1' ? 'style="stroke:#55b055;stroke-width:5"' : 'style="stroke:#9be09b;stroke-width:3"');
      for (const v of pick(k)) s += line(v, `class="${c}"`);
    }
    s += line([1275, '', 'M1568 540l-60 110-120 200-243 382'], 'class="rail"');
    r.querySelector('#roads').innerHTML = s;
    s = '';
    for (const [c, bg, p] of ORDERS) {
      s += `<path d="${shift(p, 0)}" style="stroke:${bg};stroke-width:6"/>`;
      s += `<path d="${shift(p, 1.4)}" style="stroke:${c};stroke-width:3;stroke-dasharray:5 4;stroke-linecap:butt"/>`;
      s += `<path d="${shift(p, -1.4)}" style="stroke:${c};stroke-width:3;stroke-dasharray:5 4;stroke-dashoffset:4.500;stroke-linecap:butt"/>`;
    }
    r.querySelector('#orders').innerHTML = s;
    const pins = [[1303,250],[1271,274]].map(([x, y]) => `<path d="M${x} ${y-8}l8 8-8 8-8-8z" style="fill:#ffcc00;stroke:#000;stroke-width:2.500;stroke-linejoin:miter"/>`).join('');
    r.querySelector('#labels').innerHTML = LABELS.map(([c, t, x, y, a]) =>
      `<text class="${c}" x="${x}" y="${y}"${a ? ` transform="rotate(${a} ${x} ${y - 4})"` : ''}>${t}</text>`).join('') + pins;
  }
});

const COLS = [['TRO Name',562],['Condition Start Date/Time',225],['Condition End Date/Time',225],['Regulated Place Type',192],
  ['General Regulation Type',225],['Order Reporting Point',225],['Last Event Date',168]];
const RL = 'Regulation Location', PN = 'Permanent Notice Of Making';
const ROWS = [
  ['The Highland Council TEST Inverness Only 2025','17/07/2025 00:00','',RL,'No Waiting',PN,'18/07/2025 10:29'],
  ['KIRKLEES COUNCIL (TRAFFIC REGULATION) (CONSOLIDATION ORDER PROVIDING ON-STREET PARKING PLACES, WAITING, LOADING AND STOPPING RESTRICTIONS AND MIGRATION TO A ‘MAP-BASED’ FORMAT) 2024','01/04/2024 22:59','',RL,'No Waiting',PN,'24/01/2025 17:56'],
  ['The Borough of Telford & Wrekin Council (Mapped Parking Prohibitions, Restrictions and Provisions) Traffic Regulation Order 2024','20/05/2024 10:11','',RL,'No Waiting',PN,'05/02/2025 11:59'],
  ['ETO 6 - Heart of the City Minor Traffic Orders - Static','21/08/2025 23:00','',RL,'Taxi Rank','Experimental Notice Of Making','05/09/2025 12:20'],
  ['CoC CEA WRSPP Order 2022 Am 45 Riverside','14/08/2025 23:00','',RL,'No Waiting',PN,'08/09/2025 14:14']
];
customElements.define('data-grid', class extends HTMLElement {
  constructor() {
    super();
    const r = stamp(this, 't-grid');
    r.querySelector('colgroup').innerHTML = COLS.map(c => `<col style="width:${c[1]}px">`).join('') + '<col>';
    r.querySelector('thead tr').innerHTML = COLS.map(c => `<th scope="col"><div><span>${c[0]}</span><button type="button" aria-label="${c[0]} menu"><svg width="4" height="16" viewBox="0 0 4 16"><circle cx="2" cy="2.500" r="1.700"/><circle cx="2" cy="8" r="1.700"/><circle cx="2" cy="13.500" r="1.700"/></svg></button></div></th>`).join('') + '<th></th>';
    const body = r.querySelector('tbody');
    for (const row of ROWS) {
      const tr = body.insertRow();
      if (row[0].length > 150) tr.className = 'tall';
      for (const v of [...row, '']) tr.insertCell().textContent = v;
    }
  }
});

simple('map-scale', 't-scale');
simple('search-box', 't-search');
simple('top-bar', 't-top');
simple('grid-pager', 't-pager');
simple('tro-panel', 't-panel');
simple('tro-app', 't-app');
</script>
</body>
</html>
